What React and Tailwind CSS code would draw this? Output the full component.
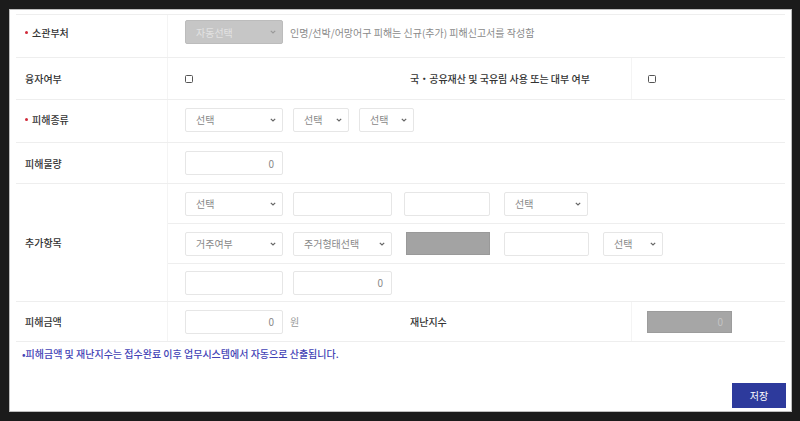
import React from "react";

const Chevron = ({ color = "#666" }) => (
  <svg width="6" height="4" viewBox="0 0 6 4" className="shrink-0">
    <path d="M0.8 0.8 L3 3 L5.2 0.8" fill="none" stroke={color} strokeWidth="1.2" />
  </svg>
);

const Select = ({ w, text, ml = "" }) => (
  <div
    className={`${w} ${ml} h-[24px] border border-[#e6e6e6] rounded-[2px] bg-white flex items-center justify-between pl-[10px] pr-[6px] text-[10px] text-[#888]`}
  >
    <span>{text}</span>
    <Chevron />
  </div>
);

const Input = ({ w, text = "", ml = "" }) => (
  <div
    className={`${w} ${ml} h-[24px] border border-[#e6e6e6] rounded-[2px] bg-white flex items-center justify-end pr-[8px] text-[10px] text-[#888]`}
  >
    {text}
  </div>
);

const Check = () => (
  <div className="w-[8px] h-[8px] border border-[#555] rounded-[1.5px] bg-white" />
);

const Label = ({ children, req, pb = "" }) => (
  <div className={`w-[152px] shrink-0 flex items-center pl-[9px] ${pb} border-r border-[#f4f4f4] text-[10px] font-medium text-[#333]`}>
    {req && <span className="w-[3px] h-[3px] rounded-full bg-[#d02a3a] mr-[4px]" />}
    {children}
  </div>
);

export default function App() {
  return (
    <div className="w-[800px] h-[421px] bg-[#1b1b1b] pl-[9px] pt-[9px] pr-[8px] pb-[9px] font-['Noto_Sans_CJK_KR',sans-serif]">
      <div className="w-full h-full bg-white border border-[#bdbdbd] pl-[6px] pr-[6px] pt-[4px] flex flex-col">
        <div className="border-t border-[#eee]">
          {/* Row 1 */}
          <div className="flex h-[43px] border-b border-[#eee]">
            <Label req pb="pb-[8px]">소관부처</Label>
            <div className="flex items-center pl-[17px] pb-[8px]">
              <div className="w-[98px] h-[24px] bg-[#c6c6c6] border border-[#bcbcbc] rounded-[2px] flex items-center justify-between pl-[10px] pr-[6px] text-[10px] text-[#e2e2e2]">
                <span>자동선택</span>
                <Chevron color="#9a9a9a" />
              </div>
              <span className="ml-[7px] text-[10px] text-[#8a8a8a]">
                인명/선박/어망어구 피해는 신규(추가) 피해신고서를 작성함
              </span>
            </div>
          </div>
          {/* Row 2 */}
          <div className="flex h-[42px] border-b border-[#eee]">
            <Label>융자여부</Label>
            <div className="w-[232px] flex items-center pl-[17px]">
              <Check />
            </div>
            <div className="w-[232px] flex items-center pl-[10px] border-r border-[#f4f4f4] text-[10px] font-medium text-[#333]">
              국・공유재산 및 국유림 사용 또는 대부 여부
            </div>
            <div className="flex items-center pl-[16px]">
              <Check />
            </div>
          </div>
          {/* Row 3 */}
          <div className="flex h-[43px] border-b border-[#eee]">
            <Label req pb="pb-[3px]">피해종류</Label>
            <div className="flex items-center pl-[17px] pb-[3px]">
              <Select w="w-[98px]" text="선택" />
              <Select w="w-[56px]" ml="ml-[10px]" text="선택" />
              <Select w="w-[55px]" ml="ml-[10px]" text="선택" />
            </div>
          </div>
          {/* Row 4 */}
          <div className="flex h-[41px] border-b border-[#eee]">
            <Label>피해물량</Label>
            <div className="flex items-center pl-[17px]">
              <Input w="w-[98px]" text="0" />
            </div>
          </div>
          {/* Row 5 */}
          <div className="flex h-[118px] border-b border-[#eee]">
            <Label>추가항목</Label>
            <div className="flex-1 flex flex-col">
              <div className="h-[40px] border-b border-[#eee] flex items-center pl-[17px]">
                <Select w="w-[98px]" text="선택" />
                <Input w="w-[99px]" ml="ml-[10px]" />
                <Input w="w-[86px]" ml="ml-[12px]" />
                <Select w="w-[84px]" ml="ml-[14px]" text="선택" />
              </div>
              <div className="h-[40px] border-b border-[#eee] flex items-center pl-[17px]">
                <Select w="w-[98px]" text="거주여부" />
                <Select w="w-[99px]" ml="ml-[10px]" text="주거형태선택" />
                <div className="w-[84px] ml-[14px] h-[23px] bg-[#a3a3a3] border border-[#999]" />
                <Input w="w-[85px]" ml="ml-[14px]" />
                <Select w="w-[60px]" ml="ml-[14px]" text="선택" />
              </div>
              <div className="flex-1 flex items-center pl-[17px]">
                <Input w="w-[98px]" />
                <Input w="w-[99px]" ml="ml-[10px]" text="0" />
              </div>
            </div>
          </div>
          {/* Row 6 */}
          <div className="flex h-[40px] border-b border-[#eee]">
            <Label>피해금액</Label>
            <div className="w-[232px] flex items-center pl-[17px]">
              <Input w="w-[98px]" text="0" />
              <span className="ml-[7px] text-[10px] text-[#999]">원</span>
            </div>
            <div className="w-[232px] flex items-center pl-[10px] border-r border-[#f4f4f4] text-[10px] font-medium text-[#333]">
              재난지수
            </div>
            <div className="flex items-center pl-[15px]">
              <div className="w-[85px] h-[22px] bg-[#a6a6a6] border border-[#9c9c9c] flex items-center justify-end pr-[8px] text-[10px] text-[#c4c4c4]">
                0
              </div>
            </div>
          </div>
        </div>
        {/* Note */}
        <div className="h-[22px] flex items-center pl-[6px] text-[10px] font-medium text-[#4343b6]">
          •피해금액 및 재난지수는 접수완료 이후 업무시스템에서 자동으로 산출됩니다.
        </div>
        <div className="flex justify-end mt-[19px] -mr-[1px]">
          <div className="w-[54px] h-[25px] bg-[#2d3a9c] flex items-center justify-center text-[10px] text-white">
            저장
          </div>
        </div>
      </div>
    </div>
  );
}
